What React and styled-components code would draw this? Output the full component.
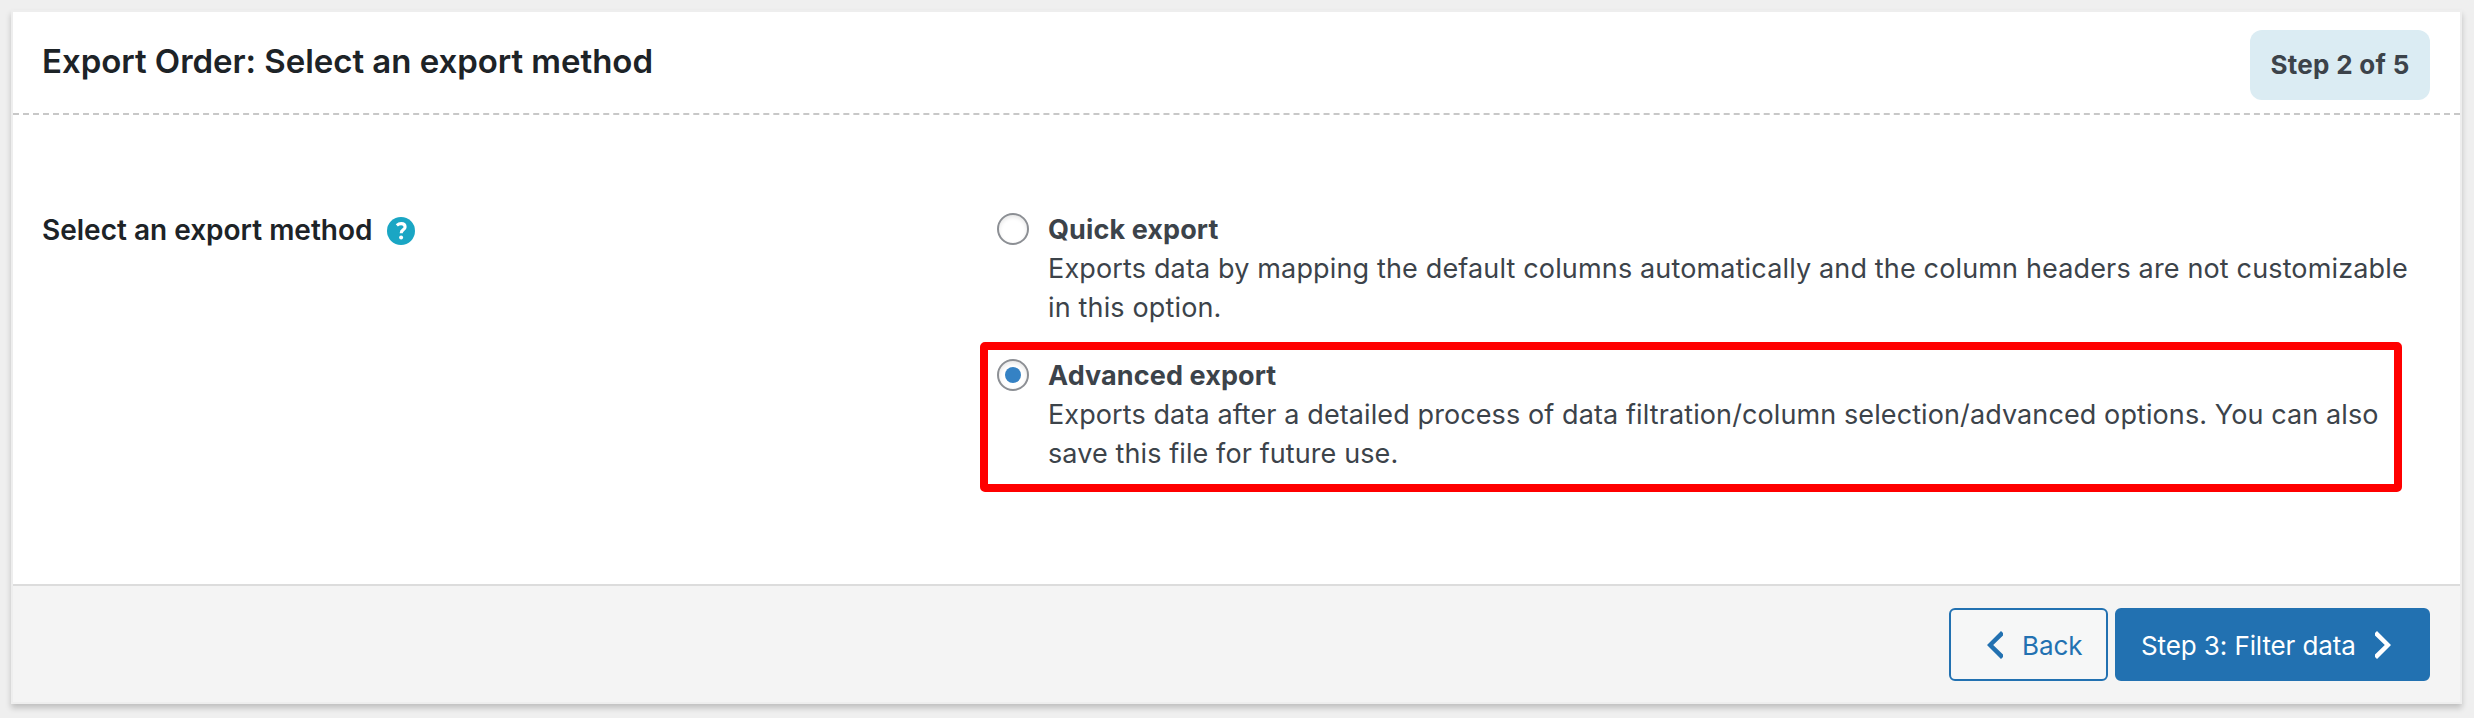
import React from "react";
import styled, { createGlobalStyle } from "styled-components";

const Global = createGlobalStyle`
  *, *::before, *::after { box-sizing: border-box; }
  body { margin: 0; background: #efefef; font-family: Inter, "Liberation Sans", sans-serif; color: #3c434a; }
  h1, h2, p { margin: 0; }
`;

const Page = styled.div`
  height: 718px;
  padding: 10px 12px 14px 11px;
`;

const Card = styled.main`
  height: 694px;
  display: flex;
  flex-direction: column;
  background: #fff;
  border: 2px solid #eee;
  box-shadow: 0 4px 6px rgba(0, 0, 0, 0.2);
`;

const Header = styled.header`
  height: 103px;
  flex: none;
  display: flex;
  justify-content: space-between;
  align-items: flex-start;
  padding: 18px 30px 0 29px;
  border-bottom: 2px dashed #c8c8c8;
`;

const Title = styled.h1`
  font-size: 33px;
  font-weight: 600;
  line-height: 40px;
  padding-top: 11px;
  letter-spacing: -0.04px;
  color: #1d2327;
  white-space: nowrap;
`;

const StepBadge = styled.div`
  width: 180px;
  height: 70px;
  border-radius: 12px;
  background: #dbecf3;
  font-size: 26px;
  font-weight: 700;
  line-height: 70px;
  letter-spacing: 0.3px;
  text-align: center;
`;

const Body = styled.section`
  flex: 1;
  display: flex;
  padding: 96px 0 0 29px;
`;

const LabelCell = styled.div`
  width: 938px;
  flex: none;
  display: flex;
  align-items: flex-start;
  gap: 14px;
  padding-top: 2px;
`;

const Label = styled.h2`
  font-size: 28px;
  font-weight: 600;
  line-height: 34px;
  color: #1d2327;
  white-space: nowrap;
`;

const HelpIcon = styled.svg`
  width: 28px;
  height: 28px;
  margin-top: 4px;
`;

const Options = styled.div`
  display: flex;
  flex-direction: column;
  width: 1440px;
`;

const Option = styled.label`
  display: flex;
  gap: 19px;
  height: 150px;
  width: 1422px;
  padding: 0 0 0 17px;
  ${(p) =>
    p.$highlighted
      ? "border: 8px solid #f00; border-radius: 5px; padding: 7px 0 0 9px; margin-top: -19px;"
      : ""}
`;

const Radio = styled.input`
  appearance: none;
  flex: none;
  width: 32px;
  height: 32px;
  margin: 2px 0 0;
  border: 2px solid #8c8f94;
  border-radius: 50%;
  background: #fff;
  box-shadow: inset 0 2px 4px rgba(0, 0, 0, 0.1);
  display: grid;
  place-items: center;
  &:checked::before {
    content: "";
    width: 16px;
    height: 16px;
    border-radius: 50%;
    background: #3582c4;
  }
`;

const OptionText = styled.div`
  margin-top: -1px;
`;

const OptionName = styled.p`
  font-size: 27px;
  font-weight: 700;
  line-height: 39px;
  white-space: nowrap;
  letter-spacing: 0.1px;
`;

const OptionLine = styled.p`
  font-size: 27px;
  line-height: 39px;
  white-space: nowrap;
  letter-spacing: ${(p) => p.$spacing}px;
`;

const Footer = styled.footer`
  height: 118px;
  flex: none;
  display: flex;
  justify-content: flex-end;
  gap: 7px;
  padding: 22px 30px 0 0;
  background: #f4f4f4;
  border-top: 2px solid #dcdcdc;
`;

const Button = styled.button`
  width: ${(p) => (p.$primary ? 315 : 159)}px;
  height: 73px;
  display: flex;
  align-items: center;
  gap: 19px;
  padding: 0 0 0 ${(p) => (p.$primary ? 24 : 36)}px;
  border: 2px solid #2271b1;
  border-radius: 6px;
  background: ${(p) => (p.$primary ? "#2271b1" : "#f6f7f7")};
  color: ${(p) => (p.$primary ? "#fff" : "#2271b1")};
  font: 400 26px Inter, "Liberation Sans", sans-serif;
  letter-spacing: -0.1px;
  white-space: nowrap;
`;

const ButtonText = styled.span`
  padding-top: 2px;
`;

const ChevronIcon = styled.svg`
  width: 16px;
  height: 28px;
  flex: none;
`;

const Chevron = ({ points }) => (
  <ChevronIcon viewBox="0 0 16 28">
    <polygon points={points} fill="currentColor" />
  </ChevronIcon>
);

export default function App() {
  return (
    <Page>
      <Global />
      <Card>
        <Header>
          <Title>Export Order: Select an export method</Title>
          <StepBadge>Step 2 of 5</StepBadge>
        </Header>
        <Body>
          <LabelCell>
            <Label>Select an export method</Label>
            <HelpIcon viewBox="0 0 28 28">
              <circle cx="14" cy="14" r="14" fill="#1aa6c4" />
              <path d="M9.8 8.4q2-1.8 4.4-1.8q3.9 0 3.9 3.3q0 1.7-2 3q-1.9 1.2-1.9 3.3" fill="none" stroke="#fff" strokeWidth="3.1" />
              <circle cx="14.1" cy="20.5" r="2" fill="#fff" />
            </HelpIcon>
          </LabelCell>
          <Options>
            <Option>
              <Radio type="radio" name="method" />
              <OptionText>
                <OptionName>Quick export</OptionName>
                <OptionLine $spacing={0.15}>Exports data by mapping the default columns automatically and the column headers are not customizable</OptionLine>
                <OptionLine $spacing={0.15}>in this option.</OptionLine>
              </OptionText>
            </Option>
            <Option $highlighted>
              <Radio type="radio" name="method" defaultChecked />
              <OptionText>
                <OptionName>Advanced export</OptionName>
                <OptionLine $spacing={0.1}>Exports data after a detailed process of data filtration/column selection/advanced options. You can also</OptionLine>
                <OptionLine $spacing={0.1}>save this file for future use.</OptionLine>
              </OptionText>
            </Option>
          </Options>
        </Body>
        <Footer>
          <Button>
            <Chevron points="14,0 16,2 16,4.6 6.2,14 16,23.4 16,26 14,28 0,14" />
            <ButtonText>Back</ButtonText>
          </Button>
          <Button $primary>
            <ButtonText>Step 3: Filter data</ButtonText>
            <Chevron points="2,0 0,2 0,4.6 9.8,14 0,23.4 0,26 2,28 16,14" />
          </Button>
        </Footer>
      </Card>
    </Page>
  );
}
